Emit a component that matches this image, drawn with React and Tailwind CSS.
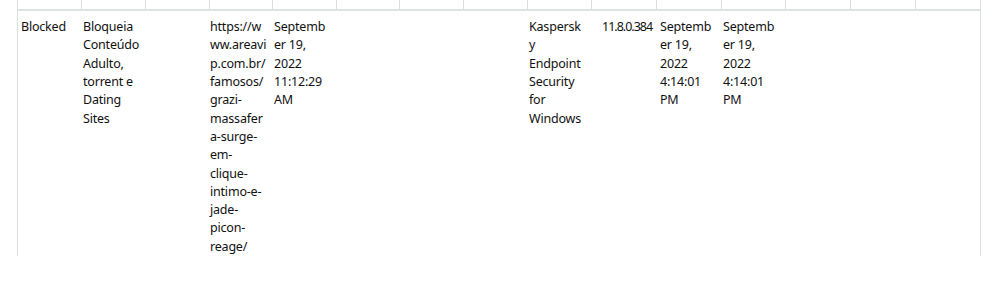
import React from "react";

const cols = "grid-cols-[64px_64px_64px_63px_64px_63px_64px_64px_64px_65px_65px_64px_65px_65px_65px]";

function Lines({ lines, className = "" }) {
  return (
    <div className={className}>
      {lines.map((l, i) => (
        <div key={i} className="whitespace-nowrap">{l}</div>
      ))}
    </div>
  );
}

export default function App() {
  const headerCells = Array.from({ length: 15 });
  return (
    <div className="w-[1000px] h-[300px] bg-white overflow-hidden" style={{ fontFamily: '"Noto Sans", "Open Sans", sans-serif' }}>
      <div className="ml-[17px] w-[964px] h-[256px] border-l border-r border-[#d8dfdc] flex flex-col">
        <div className={`grid ${cols} h-[11px] overflow-hidden`}>
          {headerCells.map((_, i) => (
            <div key={i} className={`relative ${i < 14 ? "border-r border-[#d8dfdc]" : ""}`}>
              {i === 11 && (
                <div className="absolute left-[3px] bottom-[7px] text-[12.5px] leading-[18px] text-[#111]">Server</div>
              )}
            </div>
          ))}
        </div>
        <div className="h-[2px] bg-[#dde3e0]" />
        <div className={`grid ${cols} pt-[7px] text-[12.5px] leading-[18.3px] text-[#111] tracking-[-0.2px]`}>
          <Lines className="pl-[3px]" lines={["Blocked"]} />
          <Lines className="pl-[1px]" lines={["Bloqueia", "Conteúdo", "Adulto,", "torrent e", "Dating", "Sites"]} />
          <div />
          <Lines className="pl-0" lines={["https://w", "ww.areavi", "p.com.br/", "famosos/", "grazi-", "massafer", "a-surge-", "em-", "clique-", "intimo-e-", "jade-", "picon-", "reage/"]} />
          <Lines className="pl-[1px]" lines={["Septemb", "er 19,", "2022", "11:12:29", "AM"]} />
          <div />
          <div />
          <div />
          <Lines className="pl-[1px]" lines={["Kaspersk", "y", "Endpoint", "Security", "for", "Windows"]} />
          <Lines className="pl-[10px] tracking-[-1px]" lines={["11.8.0.384"]} />
          <Lines className="pl-[3px]" lines={["Septemb", "er 19,", "2022", "4:14:01", "PM"]} />
          <Lines className="pl-[1px]" lines={["Septemb", "er 19,", "2022", "4:14:01", "PM"]} />
          <div />
          <div />
          <div />
        </div>
      </div>
    </div>
  );
}
